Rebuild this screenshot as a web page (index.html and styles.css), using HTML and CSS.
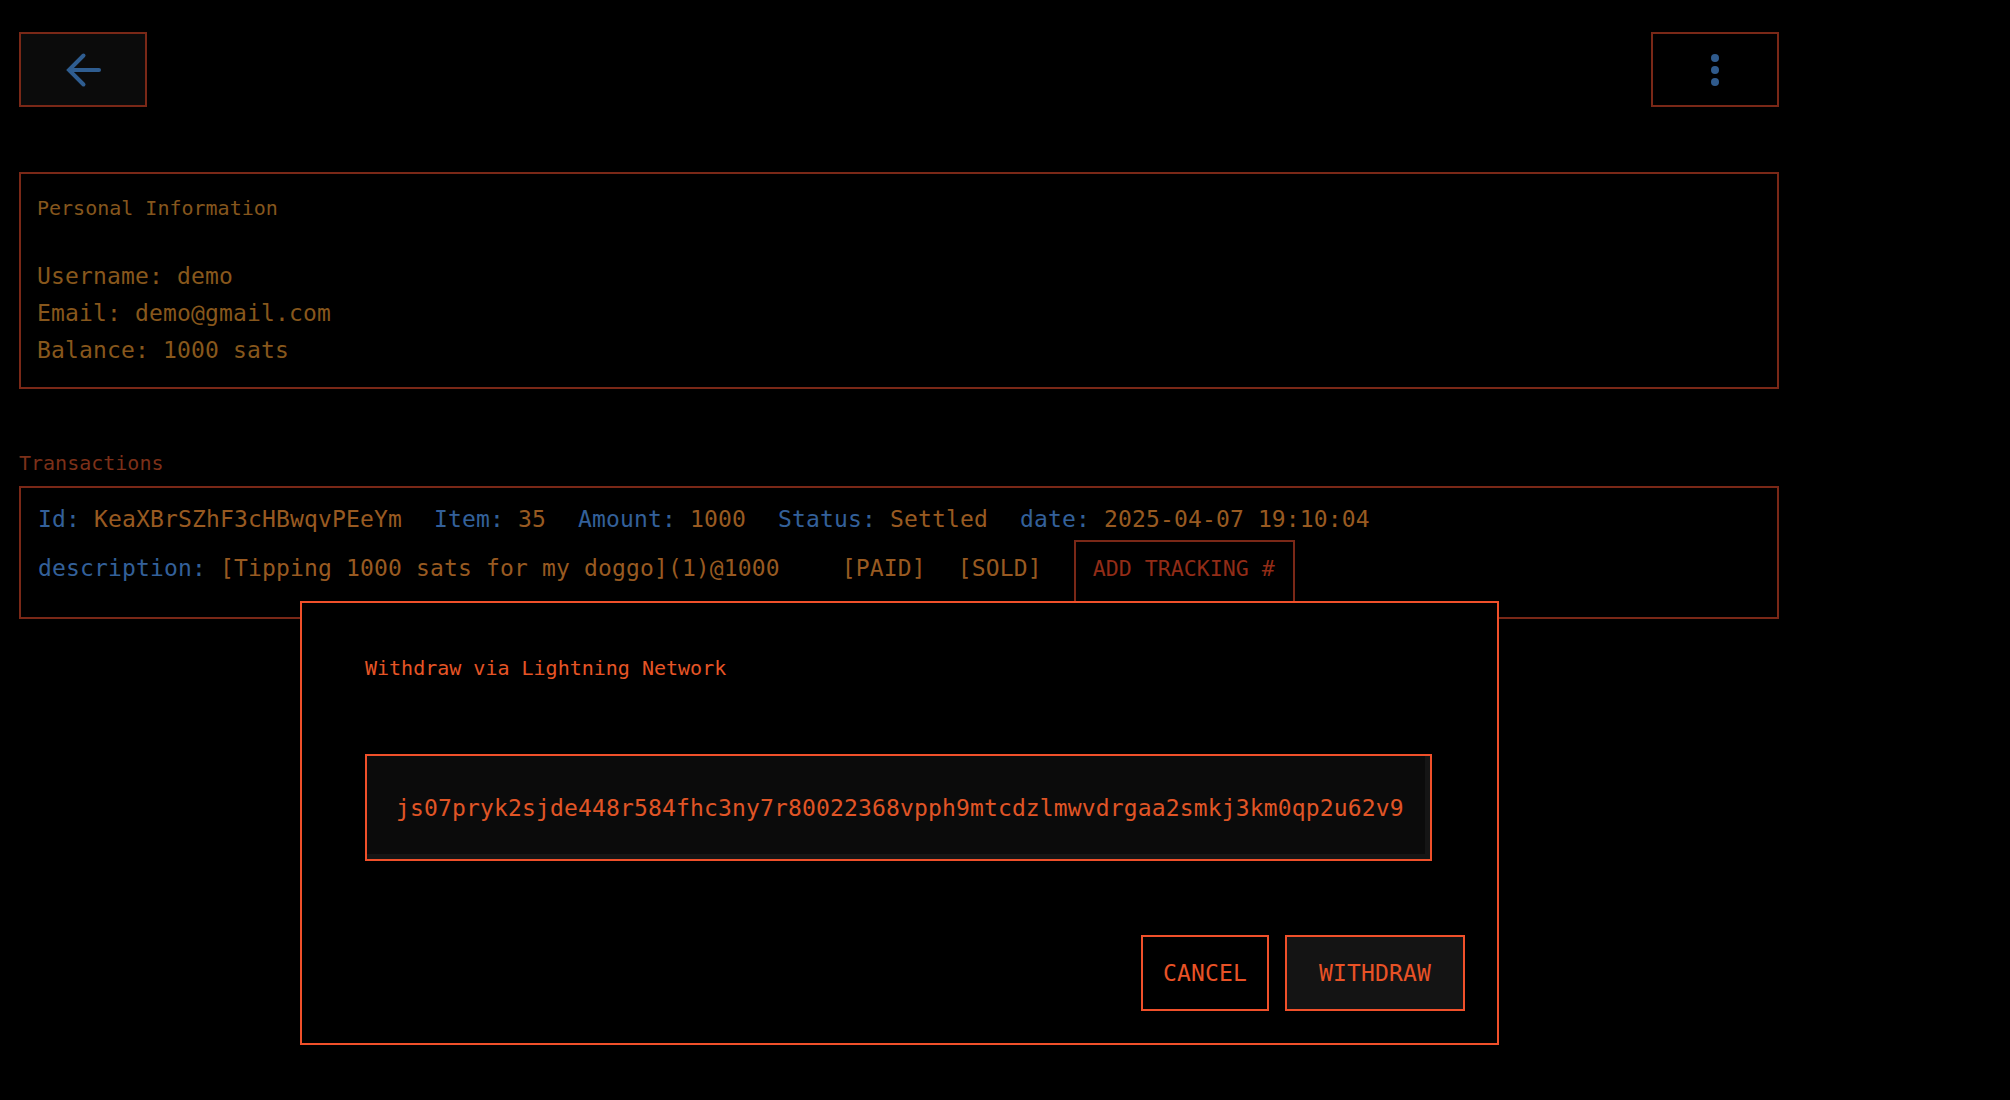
FILE: index.html
```html
<!DOCTYPE html>
<html lang="en">
<head>
<meta charset="utf-8">
<title>Account</title>
<link rel="stylesheet" href="styles.css">
</head>
<body>
<div class="page">
  <header class="topbar">
    <button class="icon-btn back-btn" aria-label="Back">
      <svg width="36" height="36" viewBox="0 0 36 36" fill="none" stroke="#2f5d90" stroke-width="4" stroke-linecap="round" stroke-linejoin="miter">
        <path d="M34 18H5"/>
        <path d="M18.5 3.5 4 18 18.5 32.5"/>
      </svg>
    </button>
    <button class="icon-btn menu-btn" aria-label="More">
      <span class="dot"></span><span class="dot"></span><span class="dot"></span>
    </button>
  </header>

  <section class="card info-card">
    <h2 class="card-title">Personal Information</h2>
    <div class="info-line">Username: demo</div>
    <div class="info-line">Email: demo@gmail.com</div>
    <div class="info-line">Balance: 1000 sats</div>
  </section>

  <h3 class="section-label">Transactions</h3>
  <section class="card tx-card">
    <div class="tx-row">
      <span><span class="k">Id:</span> <span class="v">KeaXBrSZhF3cHBwqvPEeYm</span></span>
      <span><span class="k">Item:</span> <span class="v">35</span></span>
      <span><span class="k">Amount:</span> <span class="v">1000</span></span>
      <span><span class="k">Status:</span> <span class="v">Settled</span></span>
      <span><span class="k">date:</span> <span class="v">2025-04-07 19:10:04</span></span>
    </div>
    <div class="tx-row tx-row-2">
      <span class="desc"><span class="k">description:</span> <span class="v">[Tipping 1000 sats for my doggo](1)@1000</span></span>
      <span class="v">[PAID]</span>
      <span class="v">[SOLD]</span>
      <button class="track-btn">ADD TRACKING #</button>
    </div>
  </section>
</div>

<div class="modal" role="dialog">
  <div class="modal-title">Withdraw via Lightning Network</div>
  <input class="invoice" type="text" readonly value="js07pryk2sjde448r584fhc3ny7r80022368vpph9mtcdzlmwvdrgaa2smkj3km0qp2u62v9">
  <div class="modal-actions">
    <button class="m-btn cancel">CANCEL</button>
    <button class="m-btn withdraw">WITHDRAW</button>
  </div>
</div>
</body>
</html>
```

FILE: styles.css
```css
* { box-sizing: border-box; }

html, body {
  margin: 0;
  padding: 0;
  background: #000;
}

body {
  font-family: "DejaVu Sans Mono", "Liberation Mono", monospace;
  color: #8a581d;
  width: 2010px;
  height: 1100px;
  overflow: hidden;
}

.page {
  width: 1779px;
  padding: 32px 0 0 19px;
}

.topbar {
  display: flex;
  justify-content: space-between;
  height: 75px;
}

.icon-btn {
  width: 128px;
  height: 75px;
  border: 2px solid #7a2817;
  background: #000;
  padding: 0;
  margin: 0;
  display: flex;
  align-items: center;
  justify-content: center;
  cursor: pointer;
}

.back-btn { background: #0b0b0b; }

.back-btn svg { display: block; }

.menu-btn {
  flex-direction: column;
  gap: 4px;
}

.dot {
  width: 8px;
  height: 8px;
  border-radius: 50%;
  background: #2f5a8c;
  display: block;
}

.card {
  border: 2px solid #7a2817;
}

.info-card {
  margin-top: 65px;
  padding: 22px 16px 18px 16px;
  height: 217px;
}

.card-title {
  margin: 0 0 38px 0;
  font-weight: normal;
  font-size: 20px;
  line-height: 24px;
  color: #85561d;
}

.info-line {
  font-size: 23px;
  line-height: 37px;
  letter-spacing: 0.15px;
  color: #87571c;
}

.section-label {
  margin: 62px 0 11px 0;
  font-weight: normal;
  font-size: 20px;
  line-height: 24px;
  color: #7c3019;
}

.tx-card {
  padding: 17px 16px 13px 17px;
  height: 133px;
}

.tx-row {
  display: flex;
  gap: 32px;
  font-size: 23px;
  line-height: 28px;
  letter-spacing: 0.15px;
  white-space: pre;
}

.tx-row-2 {
  margin-top: 7px;
  align-items: baseline;
}

.desc { margin-right: 30px; }

.k { color: #33609a; }
.v { color: #985a21; }

.track-btn {
  font-family: inherit;
  font-size: 21.6px;
  line-height: 26px;
  color: #922c17;
  background: #000;
  border: 2px solid #7a2817;
  padding: 14px 18px 20px 17px;
  margin: 0;
  letter-spacing: 0;
}

.modal {
  position: fixed;
  left: 300px;
  top: 601px;
  width: 1199px;
  height: 444px;
  border: 2px solid #f0502a;
  background: #000;
  padding: 53px 32px 32px 63px;
}

.modal-title {
  font-size: 20px;
  line-height: 24px;
  color: #e65526;
}

.invoice {
  display: block;
  margin-top: 74px;
  width: 1067px;
  height: 107px;
  border: 2px solid #f0502a;
  background: #0b0b0b;
  box-shadow: inset -5px -5px 0 #151515;
  color: #e05526;
  font-family: inherit;
  font-size: 23px;
  letter-spacing: 0.15px;
  padding: 0 0 0 29px;
  outline: none;
}

.modal-actions {
  margin-top: 74px;
  display: flex;
  justify-content: flex-end;
  gap: 16px;
}

.m-btn {
  font-family: inherit;
  font-size: 23px;
  line-height: 28px;
  letter-spacing: 0.15px;
  height: 76px;
  border: 2px solid #f0502a;
  color: #e85226;
  margin: 0;
  cursor: pointer;
}

.cancel {
  width: 128px;
  padding: 22px 0;
  background: #000;
}

.withdraw {
  width: 180px;
  padding: 22px 0;
  background: #141414;
}
```
